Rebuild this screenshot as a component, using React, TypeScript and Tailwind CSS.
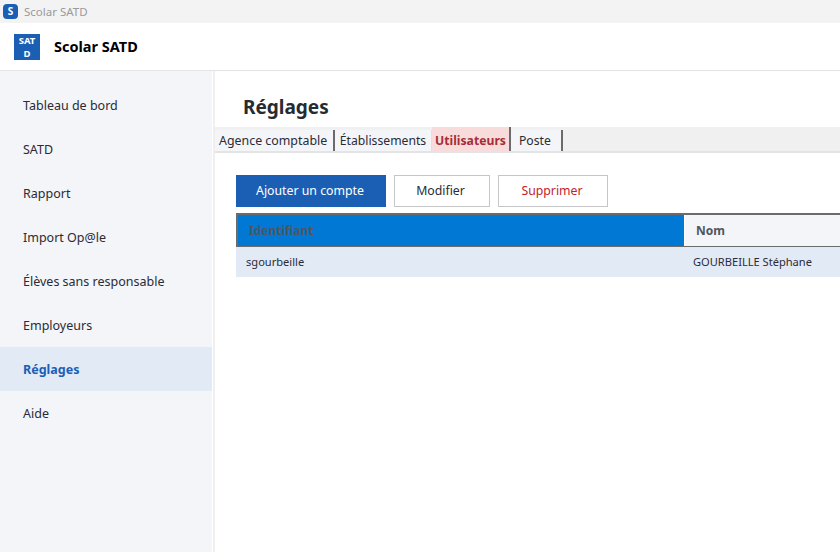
const NAV = ["Tableau de bord", "SATD", "Rapport", "Import Op@le", "Élèves sans responsable", "Employeurs", "Réglages", "Aide"];

const font = { fontFamily: '"Noto Sans", "Open Sans", sans-serif' };

export default function App() {
  return (
    <div style={font} className="w-[840px] h-[552px] overflow-hidden flex flex-col bg-white text-[#1f2937]">
      {/* barre de titre */}
      <div className="h-[23px] shrink-0 bg-[#f3f3f3] flex items-center pl-[3px] gap-[6px]">
        <div className="w-[15px] h-[15px] rounded-[4px] bg-[#1b5fb5] text-white text-[10px] font-bold flex items-center justify-center">S</div>
        <span className="text-[11.5px] text-[#9a9a9a]">Scolar SATD</span>
      </div>

      {/* en-tete */}
      <div className="h-[48px] shrink-0 bg-white border-b border-[#e2e4e8] flex items-center pl-[14px]">
        <div className="w-[26px] h-[26px] bg-[#1b5fb5] text-white text-[9.5px] leading-[13px] font-bold text-center flex items-center justify-center">
          SAT<br />D
        </div>
        <span className="ml-[14px] text-[14.5px] font-bold text-black">Scolar SATD</span>
      </div>

      <div className="flex flex-1 min-h-0">
        {/* menu */}
        <div className="w-[212px] shrink-0 bg-[#f3f5f8] pt-[12px]">
          {NAV.map((item) =>
            item === "Réglages" ? (
              <div key={item} className="h-[44px] pl-[23px] pt-[2px] flex items-center bg-[#e2eaf6] text-[12.5px] font-bold text-[#1b5fb5]">{item}</div>
            ) : (
              <div key={item} className="h-[44px] pl-[23px] pt-[2px] flex items-center text-[12.5px] text-[#2b2b35]">{item}</div>
            )
          )}
        </div>
        <div className="w-[1px] shrink-0 bg-white"></div>
        <div className="w-[2px] shrink-0 bg-[#efefef]"></div>

        {/* contenu */}
        <div className="flex-1 min-w-0">
          <h1 className="h-[56px] pl-[28px] pt-[16px] flex items-center text-[19px] font-bold text-[#252b33]">Réglages</h1>

          {/* onglets */}
          <div className="h-[26px] bg-[#f0f0f0] border-b-2 border-[#e4e4e4] flex items-end">
            <div className="w-[120px] h-[21px] bg-[#f3f5f8] border-r-2 border-[#6b6b6b] text-[12.4px] text-[#2b2b35] flex items-center pl-[4px] pt-[2px]">Agence comptable</div>
            <div className="w-[97px] h-[21px] bg-[#f3f5f8] border-r border-[#e0e0e0] text-[12.2px] text-[#2b2b35] flex items-center justify-center pt-[2px]">Établissements</div>
            <div className="w-[79px] h-[24px] bg-[#f8dcdc] border-r-2 border-[#6b6b6b] text-[12.2px] font-bold text-[#a82c35] flex items-center justify-center pt-[5px]">Utilisateurs</div>
            <div className="w-[52px] h-[21px] bg-[#f3f5f8] border-r-2 border-[#6b6b6b] text-[12.2px] text-[#2b2b35] flex items-center pl-[8px] pt-[2px]">Poste</div>
          </div>

          <div className="pt-[22px] pl-[21px]">
            <div className="flex gap-[8px] h-[32px]">
              <button className="w-[150px] bg-[#1b5fb5] text-white text-[12.3px] pt-[1px] pr-[2px]">Ajouter un compte</button>
              <button className="w-[96px] bg-white border border-[#c6c6c8] text-[12.3px] text-[#2b2b35] pt-[1px] pr-[3px]">Modifier</button>
              <button className="w-[110px] bg-white border border-[#c6c6c8] text-[12.3px] text-[#c4232b] pt-[1px] pr-[2px]">Supprimer</button>
            </div>

            <div className="mt-[6px] border-t-2 border-b border-[#6b6b6b] h-[34px] flex w-[604px]">
              <div className="w-[449px] bg-[#0078d4] border-l-2 border-r border-[#6b6b6b] border-r-white pl-[11px] flex items-center text-[12px] font-bold text-[#4f5660]">Identifiant</div>
              <div className="flex-1 bg-[#f3f5f8] pl-[11px] flex items-center text-[12px] font-bold text-[#4f5660]">Nom</div>
            </div>
            <div className="h-[30px] bg-[#e2eaf6] flex w-[604px] items-center text-[11.1px] text-[#2b2b35]">
              <div className="w-[457px] pl-[10px]">sgourbeille</div>
              <div>GOURBEILLE Stéphane</div>
            </div>
          </div>
        </div>
      </div>
    </div>
  );
}
